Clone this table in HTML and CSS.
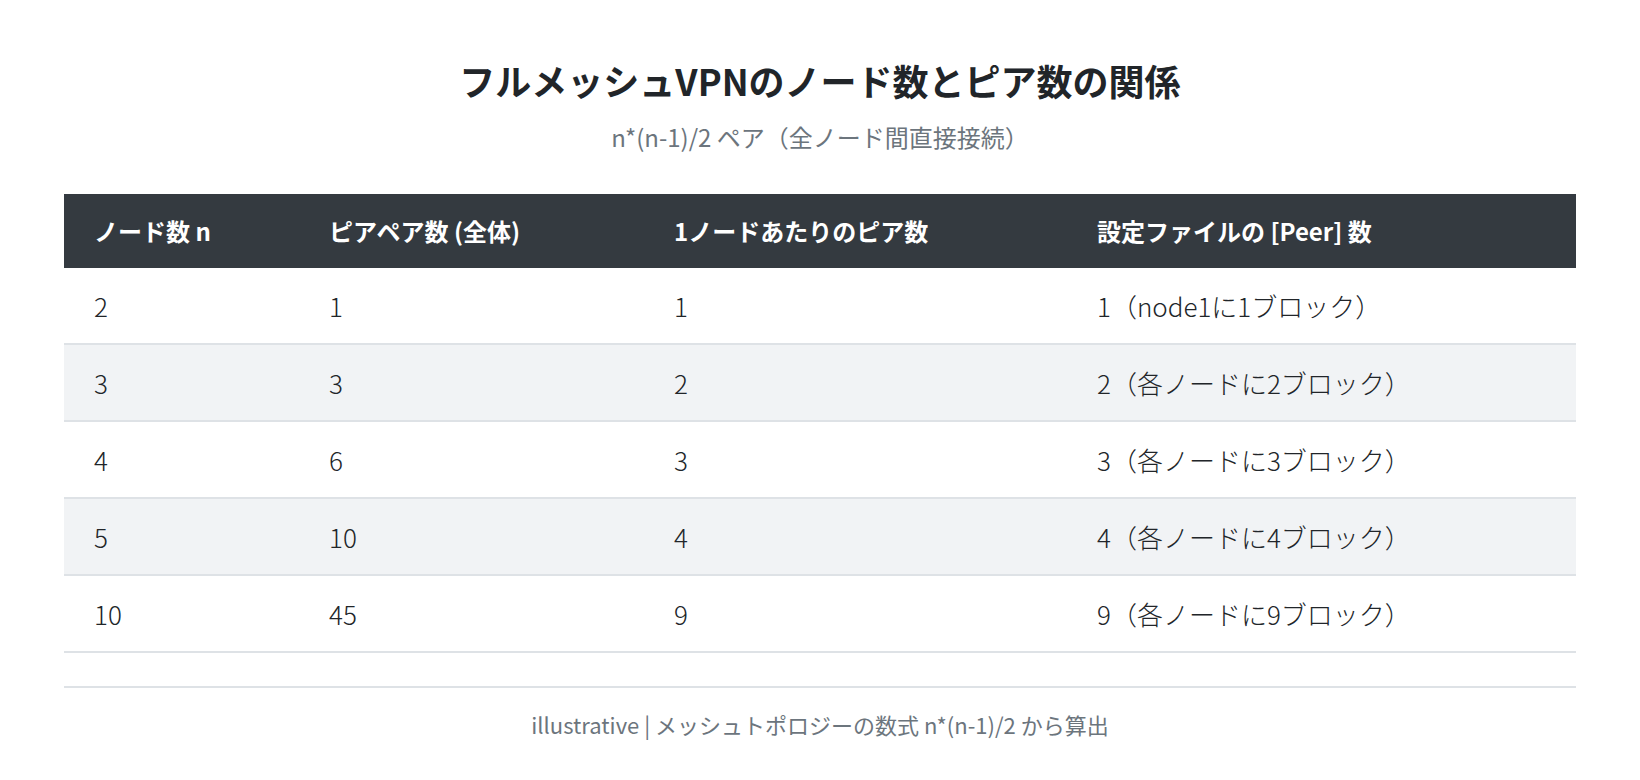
FILE: index.html
```html
<!DOCTYPE html>
<html lang="ja">
<head>
<meta charset="utf-8">
<title>フルメッシュVPNのノード数とピア数の関係</title>
<link rel="stylesheet" href="styles.css">
</head>
<body>
<main class="page">
  <header class="intro">
    <h1 class="title">フルメッシュVPNのノード数とピア数の関係</h1>
    <p class="subtitle">n*(n-1)/2 ペア（全ノード間直接接続）</p>
  </header>
  <table class="grid">
    <colgroup>
      <col class="c1"><col class="c2"><col class="c3"><col class="c4">
    </colgroup>
    <thead>
      <tr><th>ノード数 n</th><th>ピアペア数 (全体)</th><th>1ノードあたりのピア数</th><th>設定ファイルの [Peer] 数</th></tr>
    </thead>
    <tbody>
      <tr><td>2</td><td>1</td><td>1</td><td>1（node1に1ブロック）</td></tr>
      <tr class="alt"><td>3</td><td>3</td><td>2</td><td>2（各ノードに2ブロック）</td></tr>
      <tr><td>4</td><td>6</td><td>3</td><td>3（各ノードに3ブロック）</td></tr>
      <tr class="alt"><td>5</td><td>10</td><td>4</td><td>4（各ノードに4ブロック）</td></tr>
      <tr><td>10</td><td>45</td><td>9</td><td>9（各ノードに9ブロック）</td></tr>
    </tbody>
  </table>
  <footer class="note">illustrative | メッシュトポロジーの数式 n*(n-1)/2 から算出</footer>
</main>
</body>
</html>
```

FILE: styles.css
```css
* { box-sizing: border-box; }
html, body { margin: 0; padding: 0; background: #ffffff; }
body {
  font-family: "Noto Sans CJK JP", "Noto Sans", sans-serif;
  color: #212529;
}
.page {
  padding: 57px 64px 0;
}
.intro {
  text-align: center;
}
.title {
  margin: 0;
  font-size: 36px;
  line-height: 46px;
  font-weight: 700;
  color: #212529;
}
.subtitle {
  margin: 18px 0 0;
  font-size: 24px;
  line-height: 32px;
  color: #6c757d;
}
.grid {
  margin-top: 41px;
  width: 100%;
  border-collapse: collapse;
  table-layout: fixed;
}
.c1 { width: 235px; }
.c2 { width: 345px; }
.c3 { width: 423px; }
.c4 { width: auto; }
.grid th {
  background: #343a40;
  color: #ffffff;
  font-size: 24px;
  font-weight: 700;
  text-align: left;
  padding: 22px 30px;
  line-height: 30px;
}
.grid td {
  padding: 22px 30px;
  font-size: 26px;
  font-weight: 300;
  line-height: 31px;
  border-bottom: 2px solid #dee2e6;
  color: #212529;
}
.grid tr.alt td { background: #f1f3f5; }
.note {
  margin-top: 33px;
  border-top: 2px solid #dee2e6;
  padding-top: 20px;
  text-align: center;
  font-size: 22px;
  line-height: 32px;
  color: #6c757d;
}
```
